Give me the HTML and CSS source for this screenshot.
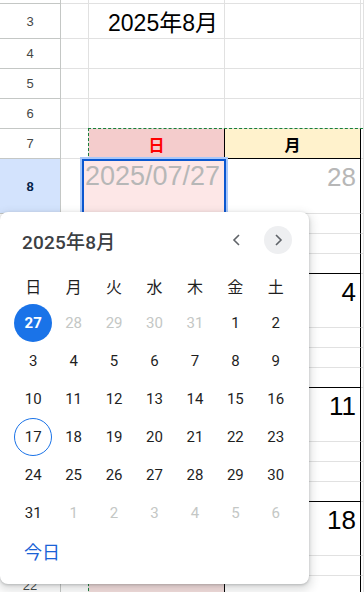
FILE: index.html
```html
<!DOCTYPE html>
<html lang="ja">
<head>
    <meta charset="UTF-8">
    <meta name="viewport" content="width=device-width, initial-scale=1.0">
    <title>カレンダー</title>
    <link rel="stylesheet" href="styles.css">
</head>
<body>
    <div class="sheet">
        <div class="row r-cut"><div class="hd"></div><div class="ca"></div><div class="cb"></div><div class="cc"></div><div class="cd"></div></div>
        <div class="row r-title"><div class="hd">3</div><div class="ca"></div><div class="cb title-cell">2025年8月</div><div class="cc"></div><div class="cd"></div></div>
        <div class="row"><div class="hd">4</div><div class="ca"></div><div class="cb"></div><div class="cc"></div><div class="cd"></div></div>
        <div class="row"><div class="hd">5</div><div class="ca"></div><div class="cb"></div><div class="cc"></div><div class="cd"></div></div>
        <div class="row"><div class="hd">6</div><div class="ca"></div><div class="cb"></div><div class="cc"></div><div class="cd"></div></div>
        <div class="row wk-end"><div class="hd">7</div><div class="ca"></div><div class="cb dow-cell sun">日</div><div class="cc dow-cell mon">月</div><div class="cd"></div></div>

        <div class="row r-date"><div class="hd active">8</div><div class="ca"></div><div class="cb"></div><div class="cc num faded">28</div><div class="cd"></div></div>
        <div class="row r-sub"><div class="hd">9</div><div class="ca"></div><div class="cb"></div><div class="cc"></div><div class="cd"></div></div>
        <div class="row r-sub"><div class="hd">10</div><div class="ca"></div><div class="cb"></div><div class="cc"></div><div class="cd"></div></div>
        <div class="row r-sub wk-end"><div class="hd">11</div><div class="ca"></div><div class="cb"></div><div class="cc"></div><div class="cd"></div></div>

        <div class="row r-week"><div class="hd">12</div><div class="ca"></div><div class="cb"></div><div class="cc num">4</div><div class="cd"></div></div>
        <div class="row r-sub"><div class="hd">13</div><div class="ca"></div><div class="cb"></div><div class="cc"></div><div class="cd"></div></div>
        <div class="row r-sub"><div class="hd">14</div><div class="ca"></div><div class="cb"></div><div class="cc"></div><div class="cd"></div></div>
        <div class="row r-sub wk-end"><div class="hd">15</div><div class="ca"></div><div class="cb"></div><div class="cc"></div><div class="cd"></div></div>

        <div class="row r-week"><div class="hd">16</div><div class="ca"></div><div class="cb"></div><div class="cc num">11</div><div class="cd"></div></div>
        <div class="row r-sub"><div class="hd">17</div><div class="ca"></div><div class="cb"></div><div class="cc"></div><div class="cd"></div></div>
        <div class="row r-sub"><div class="hd">18</div><div class="ca"></div><div class="cb"></div><div class="cc"></div><div class="cd"></div></div>
        <div class="row r-sub wk-end"><div class="hd">19</div><div class="ca"></div><div class="cb"></div><div class="cc"></div><div class="cd"></div></div>

        <div class="row r-week"><div class="hd">20</div><div class="ca"></div><div class="cb"></div><div class="cc num">18</div><div class="cd"></div></div>
        <div class="row r-sub"><div class="hd">21</div><div class="ca"></div><div class="cb"></div><div class="cc"></div><div class="cd"></div></div>
        <div class="row r-sub"><div class="hd">22</div><div class="ca"></div><div class="cb"></div><div class="cc"></div><div class="cd"></div></div>
    </div>

    <!-- copy marquee + cell editor sit over the grid -->
    <div class="marquee"></div>
    <div class="editor">2025/07/27</div>

    <div class="picker">
        <div class="picker-head">
            <span class="picker-title">2025年8月</span>
            <button class="nav">
                <svg width="12" height="12" viewBox="0 0 12 12"><polyline points="8,1 3,6 8,11" /></svg>
            </button>
            <button class="nav hover">
                <svg width="12" height="12" viewBox="0 0 12 12"><polyline points="4,1 9,6 4,11" /></svg>
            </button>
        </div>
        <div class="days">
            <span class="dow">日</span><span class="dow">月</span><span class="dow">火</span><span class="dow">水</span><span class="dow">木</span><span class="dow">金</span><span class="dow">土</span>

            <span class="day"><b class="selected">27</b></span><span class="day out">28</span><span class="day out">29</span><span class="day out">30</span><span class="day out">31</span><span class="day">1</span><span class="day">2</span>
            <span class="day">3</span><span class="day">4</span><span class="day">5</span><span class="day">6</span><span class="day">7</span><span class="day">8</span><span class="day">9</span>
            <span class="day">10</span><span class="day">11</span><span class="day">12</span><span class="day">13</span><span class="day">14</span><span class="day">15</span><span class="day">16</span>
            <span class="day"><b class="today-ring">17</b></span><span class="day">18</span><span class="day">19</span><span class="day">20</span><span class="day">21</span><span class="day">22</span><span class="day">23</span>
            <span class="day">24</span><span class="day">25</span><span class="day">26</span><span class="day">27</span><span class="day">28</span><span class="day">29</span><span class="day">30</span>
            <span class="day">31</span><span class="day out">1</span><span class="day out">2</span><span class="day out">3</span><span class="day out">4</span><span class="day out">5</span><span class="day out">6</span>
        </div>
        <div class="picker-foot">
            <span class="today-link">今日</span>
        </div>
    </div>
</body>
</html>
```

FILE: styles.css
```css
body {
    margin: 0;
    width: 364px;
    height: 592px;
    overflow: hidden;
    position: relative;
    background: #fff;
    font-family: "Liberation Sans", "Noto Sans CJK JP", sans-serif;
}

.sheet {
    display: flex;
    flex-direction: column;
}

.row {
    display: flex;
    height: 30px;
}

.row > div {
    box-sizing: border-box;
    flex: none;
    height: 100%;
    border-right: 1px solid #e1e1e1;
    border-bottom: 1px solid #e1e1e1;
}

.r-cut { height: 4px; }
.r-title { height: 35px; }
.r-date { height: 55px; }
.r-week { height: 54px; }
.r-sub { height: 20px; }

.hd {
    width: 61px;
    border-right-color: #c4c7c5 !important;
    border-bottom-color: #c4c7c5 !important;
    display: flex;
    align-items: center;
    justify-content: center;
    font-size: 13px;
    color: #444746;
}

.hd.active {
    background: #d3e3fd;
    color: #041e49;
    font-weight: bold;
}

.ca { width: 28px; }
.cb { width: 136px; }
.cc { width: 136px; }
.cd { flex: 1 !important; }

/* black frame of the calendar block */
.wk-end .cb,
.wk-end .cc {
    border-bottom-color: #000 !important;
}

.row:nth-child(n+6) .cb,
.row:nth-child(n+6) .cc {
    border-right-color: #000;
}

.row:nth-child(n+7) .cb {
    background: #f4dedd;
}

.title-cell {
    display: flex;
    align-items: center;
    justify-content: flex-end;
    padding-right: 6px;
    font-size: 23px;
    color: #000;
}

.dow-cell {
    display: flex;
    align-items: center;
    justify-content: center;
    font-size: 16px;
    font-weight: bold;
}

.dow-cell.sun { background: #f4cccc; color: #ff0000; }
.dow-cell.mon { background: #fff2cc; color: #000; }

.num {
    text-align: right;
    padding: 3px 4px 0 0;
    font-size: 26px;
    line-height: 30px;
    color: #000;
}

.num.faded { color: #b7b7b7; }

.marquee {
    position: absolute;
    left: 88px;
    top: 128px;
    right: -4px;
    bottom: -4px;
    border-top: 1px dashed #188038;
    border-left: 1px dashed #188038;
}

.editor {
    position: absolute;
    left: 82px;
    top: 159px;
    width: 144px;
    height: 56px;
    box-sizing: border-box;
    border: 2px solid #0b57d0;
    box-shadow: 0 0 0 2px #a8c7fa;
    background: #fde7e7;
    padding-left: 1px;
    font-size: 27px;
    line-height: 30px;
    color: #b7b7b7;
    white-space: nowrap;
}

/* date picker popup */
.picker {
    position: absolute;
    left: 0;
    top: 212px;
    width: 309px;
    height: 372px;
    background: #fff;
    border-radius: 8px;
    box-shadow: 0 1px 3px rgba(60, 64, 67, 0.3), 0 4px 8px 3px rgba(60, 64, 67, 0.15);
    font-family: Roboto, "Noto Sans CJK JP", sans-serif;
    color: #1f1f1f;
}

.picker-head {
    display: flex;
    align-items: center;
    height: 56px;
    padding: 0 17px 0 22px;
}

.picker-title {
    flex: 1;
    font-size: 19px;
    font-weight: 500;
    color: #3c4043;
    letter-spacing: 0.2px;
}

.nav {
    width: 28px;
    height: 28px;
    margin-left: 13px;
    padding: 0;
    border: none;
    border-radius: 50%;
    background: transparent;
    display: flex;
    align-items: center;
    justify-content: center;
}

.nav.hover { background: #eeeff1; }

.nav svg polyline {
    fill: none;
    stroke: #5f6368;
    stroke-width: 1.6;
}

.days {
    display: grid;
    grid-template-columns: repeat(7, 1fr);
    grid-template-rows: 36px repeat(6, 38px);
    padding: 0 13px;
}

.dow,
.day {
    display: flex;
    align-items: center;
    justify-content: center;
    font-size: 15px;
}

.dow { font-size: 16px; }

.day.out { color: #c4c7c5; }

.day b {
    box-sizing: border-box;
    width: 38px;
    height: 38px;
    border-radius: 50%;
    display: flex;
    align-items: center;
    justify-content: center;
    font-weight: normal;
}

.day b.selected {
    background: #1a73e8;
    color: #fff;
    font-weight: bold;
}

.day b.today-ring {
    border: 1px solid #1a73e8;
}

.picker-foot {
    padding: 9px 0 0 24px;
}

.today-link {
    font-size: 18px;
    line-height: 24px;
    color: #1a62d6;
}
```
